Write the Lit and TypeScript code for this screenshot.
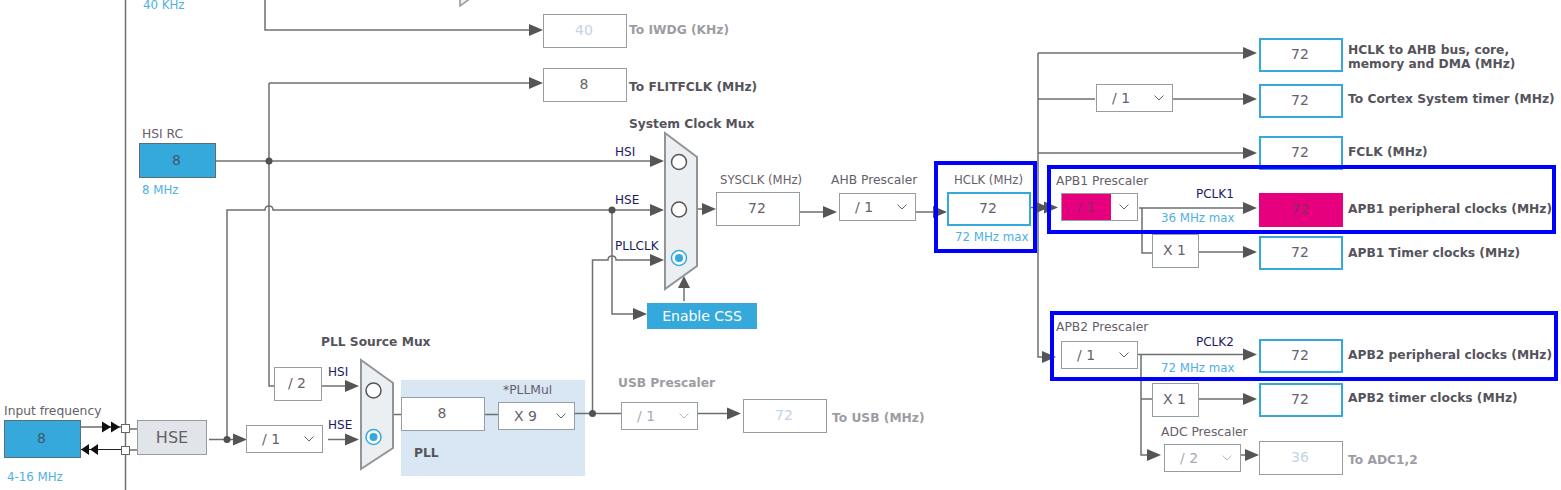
import { LitElement, css, html, svg } from "lit";
import { customElement } from "lit/decorators.js";

type Box = { x: number; y: number; w: number; h: number; v: string; cls?: string };
type Sel = { x: number; y: number; v: string; cls?: string };
type Label = { x: number; y: number; t: string; cls: string };

const BOXES: Box[] = [
  { x: 4, y: 420, w: 77, h: 38, v: "8", cls: "source" },
  { x: 137, y: 420, w: 70, h: 35, v: "HSE", cls: "hse" },
  { x: 139, y: 143, w: 77, h: 35, v: "8", cls: "source" },
  { x: 543, y: 14, w: 84, h: 34, v: "40", cls: "off" },
  { x: 543, y: 68, w: 84, h: 34, v: "8" },
  { x: 274, y: 367, w: 48, h: 34, v: "/ 2" },
  { x: 401, y: 397, w: 84, h: 34, v: "8" },
  { x: 743, y: 399, w: 84, h: 34, v: "72", cls: "off" },
  { x: 716, y: 192, w: 84, h: 34, v: "72" },
  { x: 947, y: 192, w: 84, h: 34, v: "72", cls: "out" },
  { x: 1259, y: 38, w: 84, h: 34, v: "72", cls: "out" },
  { x: 1259, y: 84, w: 84, h: 34, v: "72", cls: "out" },
  { x: 1259, y: 136, w: 84, h: 34, v: "72", cls: "out" },
  { x: 1259, y: 193, w: 84, h: 34, v: "72", cls: "alert" },
  { x: 1152, y: 234, w: 47, h: 34, v: "X 1" },
  { x: 1259, y: 236, w: 84, h: 34, v: "72", cls: "out" },
  { x: 1259, y: 339, w: 84, h: 34, v: "72", cls: "out" },
  { x: 1152, y: 383, w: 47, h: 34, v: "X 1" },
  { x: 1259, y: 383, w: 84, h: 34, v: "72", cls: "out" },
  { x: 1259, y: 441, w: 84, h: 34, v: "36", cls: "off" },
];

const SELECTS: Sel[] = [
  { x: 246, y: 425, v: "/ 1" },
  { x: 498, y: 402, v: "X 9" },
  { x: 621, y: 402, v: "/ 1", cls: "off" },
  { x: 839, y: 193, v: "/ 1" },
  { x: 1096, y: 84, v: "/ 1" },
  { x: 1061, y: 193, v: "/ 1", cls: "flag" },
  { x: 1061, y: 341, v: "/ 1" },
  { x: 1164, y: 444, v: "/ 2", cls: "off" },
];

const LABELS: Label[] = [
  { x: 143, y: 4, t: "40 KHz", cls: "hint" },
  { x: 4, y: 410, t: "Input frequency", cls: "cap" },
  { x: 7, y: 476, t: "4-16 MHz", cls: "hint" },
  { x: 142, y: 133, t: "HSI RC", cls: "cap" },
  { x: 142, y: 189, t: "8 MHz", cls: "hint" },
  { x: 629, y: 29, t: "To IWDG (KHz)", cls: "bold off" },
  { x: 629, y: 86, t: "To FLITFCLK (MHz)", cls: "bold" },
  { x: 629, y: 123, t: "System Clock Mux", cls: "bold" },
  { x: 321, y: 341, t: "PLL Source Mux", cls: "bold" },
  { x: 328, y: 371, t: "HSI", cls: "sig" },
  { x: 328, y: 424, t: "HSE", cls: "sig" },
  { x: 615, y: 151, t: "HSI", cls: "sig" },
  { x: 615, y: 199, t: "HSE", cls: "sig" },
  { x: 615, y: 245, t: "PLLCLK", cls: "sig" },
  { x: 503, y: 389, t: "*PLLMul", cls: "cap" },
  { x: 414, y: 452, t: "PLL", cls: "bold" },
  { x: 618, y: 382, t: "USB Prescaler", cls: "bold off" },
  { x: 832, y: 417, t: "To USB (MHz)", cls: "bold off" },
  { x: 720, y: 179, t: "SYSCLK (MHz)", cls: "cap tight" },
  { x: 831, y: 179, t: "AHB Prescaler", cls: "cap" },
  { x: 954, y: 179, t: "HCLK (MHz)", cls: "cap tight" },
  { x: 955, y: 236, t: "72 MHz max", cls: "hint" },
  { x: 1348, y: 49, t: "HCLK to AHB bus, core,", cls: "bold" },
  { x: 1348, y: 63, t: "memory and DMA (MHz)", cls: "bold" },
  { x: 1348, y: 98, t: "To Cortex System timer (MHz)", cls: "bold" },
  { x: 1348, y: 151, t: "FCLK (MHz)", cls: "bold" },
  { x: 1056, y: 180, t: "APB1 Prescaler", cls: "cap" },
  { x: 1196, y: 193, t: "PCLK1", cls: "sig" },
  { x: 1161, y: 217, t: "36 MHz max", cls: "hint" },
  { x: 1348, y: 208, t: "APB1 peripheral clocks (MHz)", cls: "bold" },
  { x: 1348, y: 252, t: "APB1 Timer clocks (MHz)", cls: "bold" },
  { x: 1056, y: 326, t: "APB2 Prescaler", cls: "cap" },
  { x: 1196, y: 341, t: "PCLK2", cls: "sig" },
  { x: 1161, y: 367, t: "72 MHz max", cls: "hint" },
  { x: 1348, y: 354, t: "APB2 peripheral clocks (MHz)", cls: "bold" },
  { x: 1348, y: 397, t: "APB2 timer clocks (MHz)", cls: "bold" },
  { x: 1161, y: 431, t: "ADC Prescaler", cls: "cap" },
  { x: 1348, y: 459, t: "To ADC1,2", cls: "bold off" },
];

const WIRES = [
  "M125.5 0V490",
  "M265 0V30H530",
  "M269 83H530M269 83V386H274",
  "M216 161H652",
  "M227 440V210H265q0-4 4-4t4 4H652",
  "M612 210V314H636",
  "M592.5 414V260H608q0-4 4-4t4 4H652",
  "M322 386H348",
  "M393 414.5H401M485 414.5H498M575 413.5H621M697 413.5H730",
  "M209 439.5H240M328 439.5H348",
  "M697 209H710M800 212H830M916 212H940",
  "M684 301V284",
  "M1031 207.5H1050",
  "M1038 53V357H1046M1038 53H1245M1038 99H1095M1173 99H1245M1038 153H1245",
  "M1139 208H1245M1142 208V253H1152M1199 252H1245",
  "M1138 354.5H1245M1141 355V455H1150M1141 399H1152M1199 399H1245M1241 455H1250",
];

// tip x, tip y of each grey arrow head
const ARROWS: [number, number][] = [
  [543, 30], [543, 83], [664, 161], [664, 210], [664, 260], [647, 314],
  [359, 386], [359, 439.5], [247, 439.5], [741, 413.5], [716, 209], [837, 212],
  [947, 212], [1257, 53], [1257, 99], [1257, 153], [1257, 208], [1257, 252],
  [1257, 354.5], [1257, 399], [1161, 455], [1259, 455], [1056, 357],
  [1049, 207.5], [1058, 207.5],
];

const DOTS: [number, number][] = [[269, 161], [612, 210], [227, 439.5], [592.5, 413.5]];

const RADIOS: [number, number, boolean][] = [
  [373.5, 390.5, false], [373.5, 437, true],
  [679, 162, false], [679, 209.5, false], [679, 258, true],
];

const FRAMES = [
  { x: 934, y: 161, w: 103, h: 92 },
  { x: 1047, y: 165, w: 509, h: 69 },
  { x: 1050, y: 311, w: 508, h: 70 },
];

@customElement("app-root")
export class AppRoot extends LitElement {
  static styles = css`
    :host {
      display: block;
      position: relative;
      width: 1561px;
      height: 490px;
      overflow: hidden;
      background: #fff;
      font-family: "DejaVu Sans", sans-serif;
      font-size: 12px;
      color: #66606a;
    }

    svg.wires {
      position: absolute;
      inset: 0;
    }

    .pll {
      position: absolute;
      left: 401px;
      top: 380px;
      width: 184px;
      height: 96px;
      background: #d9e7f5;
    }

    .box,
    .select {
      position: absolute;
      box-sizing: border-box;
      display: flex;
      align-items: center;
      background: #fff;
      border: 1px solid #969ea5;
      font-size: 14px;
    }

    .box {
      justify-content: center;
      padding: 0 2px 2px 0;
    }

    .box.source {
      background: #36a9dc;
      border: 1px solid #5b6d78;
      color: #3d5a6c;
    }

    .box.hse {
      background: #e1e4e8;
      font-size: 16px;
      padding: 0;
    }

    .select.off {
      color: #a9a9b2;
    }

    .box.off {
      color: #c3d3e8;
    }

    .box.out {
      border: 2px solid #36a9dc;
    }

    .box.alert {
      background: #e6007e;
      border: 0;
      color: #8a2a62;
    }

    .select {
      width: 77px;
      height: 28px;
    }

    .select .val {
      box-sizing: border-box;
      align-self: stretch;
      display: flex;
      align-items: center;
      width: 49px;
      padding-left: 15px;
    }

    .select.flag .val {
      background: #e6007e;
      color: #8a2a62;
    }

    .select svg {
      margin-left: 8px;
    }

    .text {
      position: absolute;
      height: 16px;
      line-height: 16px;
      white-space: nowrap;
    }

    .cap {
      color: #66606a;
      font-size: 12.3px;
    }

    .cap.tight {
      font-size: 11.7px;
    }

    .hint {
      color: #4fb0e3;
      font-size: 11.8px;
    }

    .sig {
      color: #1b1b5e;
    }

    .bold {
      font-weight: 700;
      font-size: 12.25px;
      color: #55535c;
    }

    .bold.off {
      color: #9c9ca3;
    }

    .css {
      position: absolute;
      left: 647px;
      top: 303px;
      width: 110px;
      height: 26px;
      display: flex;
      align-items: center;
      justify-content: center;
      background: #36a9dc;
      color: #fff;
      font-size: 14px;
    }

    .frame {
      position: absolute;
      box-sizing: border-box;
      border: 4px solid #0000ff;
    }
  `;

  private renderWires() {
    return html`
      <svg class="wires" width="1561" height="490" viewBox="0 0 1561 490">
        ${WIRES.map((d) => svg`<path d=${d} fill="none" stroke="#6c6f72" stroke-width="1.5"></path>`)}
        ${ARROWS.map(([x, y]) => svg`<path d="M${x} ${y}l-14-6v12z" fill="#555"></path>`)}
        <path d="M684 276l6 12h-12z" fill="#555"></path>
        ${DOTS.map(([x, y]) => svg`<circle cx=${x} cy=${y} r="3.5" fill="#4f5357"></circle>`)}
        <path d="M81 427H121M81 449.5H121M129 429H137M129 450H137" fill="none" stroke="#222" stroke-width="1"></path>
        <path d="M102 421.5l9 5.5-9 5.5zM111 421.5l9 5.5-9 5.5zM81 449.5l8-5.5v11zM90 449.5l8-5.5v11z" fill="#111"></path>
        <rect x="121.5" y="424.5" width="8" height="8" fill="#fff" stroke="#666"></rect>
        <rect x="121.5" y="446.5" width="8" height="8" fill="#fff" stroke="#666"></rect>
        <path d="M361 360L393 383V448L361 469Z" fill="#eceff2" stroke="#8f9599" stroke-width="2"></path>
        <path d="M665 133L697 157V266L665 289Z" fill="#eceff2" stroke="#8f9599" stroke-width="2"></path>
        <path d="M460 6L471 -2H460Z" fill="#eceff2" stroke="#8f9599" stroke-width="1.5"></path>
        ${RADIOS.map(([x, y, on]) => svg`
          <circle cx=${x} cy=${y} r="7.5" fill="#fff" stroke=${on ? "#36a9dc" : "#555"} stroke-width="1.5"></circle>
          ${on ? svg`<circle cx=${x} cy=${y} r="4" fill="#36a9dc"></circle>` : null}
        `)}
      </svg>
    `;
  }

  render() {
    return html`
      <div class="pll"></div>
      ${this.renderWires()}
      ${BOXES.map(
        (b) => html`<div
          class="box ${b.cls ?? ""}"
          style="left:${b.x}px;top:${b.y}px;width:${b.w}px;height:${b.h}px"
        >${b.v}</div>`,
      )}
      ${SELECTS.map(
        (s) => html`<div class="select ${s.cls ?? ""}" style="left:${s.x}px;top:${s.y}px">
          <span class="val">${s.v}</span>
          <svg width="10" height="6" viewBox="0 0 10 6">
            <path d="M0.5 0.5L5 5L9.5 0.5" fill="none" stroke=${s.cls === "off" ? "#bbb" : "#666"}></path>
          </svg>
        </div>`,
      )}
      ${LABELS.map(
        (l) => html`<div class="text ${l.cls}" style="left:${l.x}px;top:${l.y - 7}px">${l.t}</div>`,
      )}
      <div class="css">Enable CSS</div>
      ${FRAMES.map(
        (f) => html`<div class="frame" style="left:${f.x}px;top:${f.y}px;width:${f.w}px;height:${f.h}px"></div>`,
      )}
    `;
  }
}
